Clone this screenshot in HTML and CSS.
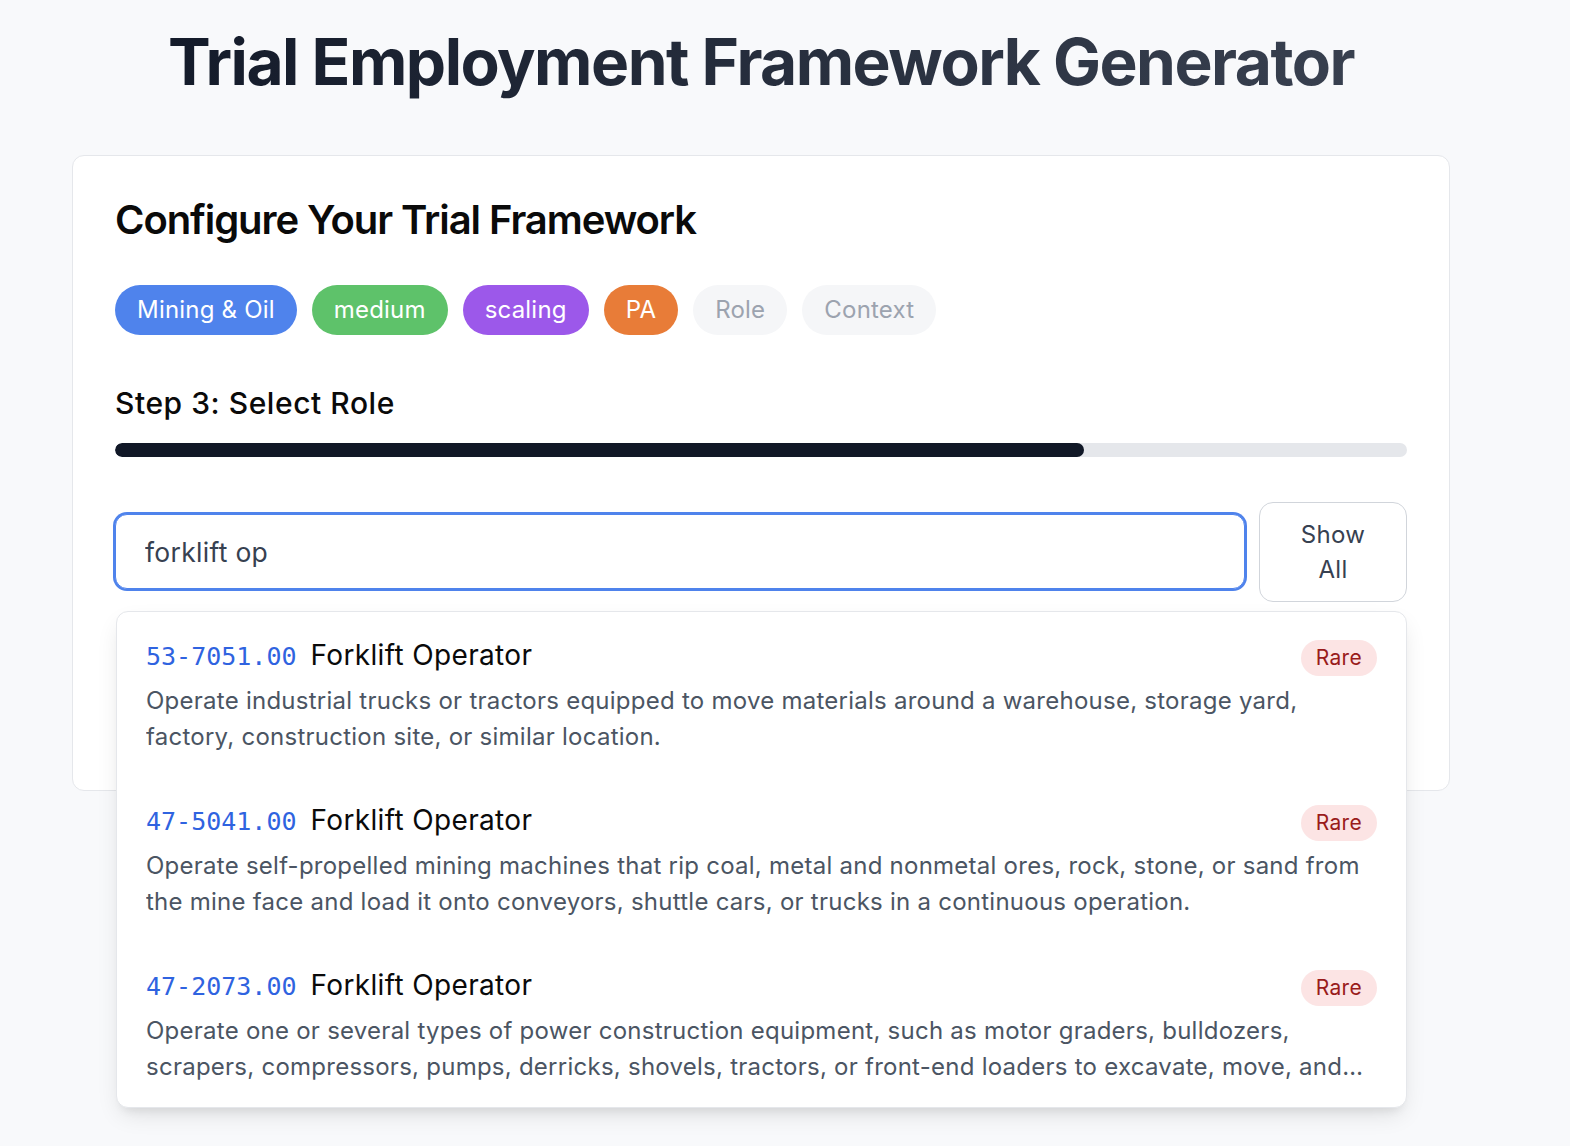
FILE: index.html
```html
<!DOCTYPE html>
<html lang="en">
<head>
<meta charset="utf-8">
<title>Trial Employment Framework Generator</title>
<link rel="stylesheet" href="styles.css">
</head>
<body>
<main class="page">
  <h1 class="page-title">Trial Employment Framework Generator</h1>
  <section class="card">
    <h2 class="card-title">Configure Your Trial Framework</h2>
    <div class="pills">
      <span class="pill pill-blue">Mining &amp; Oil</span>
      <span class="pill pill-green">medium</span>
      <span class="pill pill-purple">scaling</span>
      <span class="pill pill-orange">PA</span>
      <span class="pill pill-muted">Role</span>
      <span class="pill pill-muted">Context</span>
    </div>
    <h3 class="step-title">Step 3: Select Role</h3>
    <div class="progress"><div class="progress-fill" style="width:75%"></div></div>
    <div class="search-row">
      <input class="search-input" type="text" value="forklift op">
      <button class="show-all">Show All</button>
      <ul class="results">
        <li class="result">
          <div class="result-head">
            <div class="result-name"><span class="code">53-7051.00</span><span class="role">Forklift Operator</span></div>
            <span class="badge">Rare</span>
          </div>
          <p class="desc">Operate industrial trucks or tractors equipped to move materials around a warehouse, storage yard, factory, construction site, or similar location.</p>
        </li>
        <li class="result">
          <div class="result-head">
            <div class="result-name"><span class="code">47-5041.00</span><span class="role">Forklift Operator</span></div>
            <span class="badge">Rare</span>
          </div>
          <p class="desc">Operate self-propelled mining machines that rip coal, metal and nonmetal ores, rock, stone, or sand from the mine face and load it onto conveyors, shuttle cars, or trucks in a continuous operation.</p>
        </li>
        <li class="result">
          <div class="result-head">
            <div class="result-name"><span class="code">47-2073.00</span><span class="role">Forklift Operator</span></div>
            <span class="badge">Rare</span>
          </div>
          <p class="desc">Operate one or several types of power construction equipment, such as motor graders, bulldozers, scrapers, compressors, pumps, derricks, shovels, tractors, or front-end loaders to excavate, move, and grade earth, erect structures, or pour concrete or other hard surface pavement.</p>
        </li>
      </ul>
    </div>
    <div class="card-spacer"></div>
  </section>
</main>
</body>
</html>
```

FILE: styles.css
```css
* { box-sizing: border-box; }

html, body {
  margin: 0;
  padding: 0;
}

body {
  background: #f8f9fb;
  font-family: Inter, "Noto Sans", "Liberation Sans", sans-serif;
  color: #111827;
  min-height: 1146px;
}

.page {
  width: 1378px;
  margin-left: 72px;
  padding-top: 24px;
}

.page-title {
  margin: 0 0 54px;
  text-align: center;
  font-size: 64px;
  line-height: 1.2;
  font-weight: 700;
  letter-spacing: -0.0235em;
  background: linear-gradient(90deg, #111827, #3b4352);
  -webkit-background-clip: text;
  background-clip: text;
  color: transparent;
}

.card {
  background: #ffffff;
  border: 1px solid #e5e7eb;
  border-radius: 12px;
  padding: 40px 42px 42px;
}

.card-title {
  margin: 0;
  font-size: 40px;
  line-height: 48px;
  font-weight: 600;
  letter-spacing: -0.027em;
  color: #0a0a0a;
}

.pills {
  display: flex;
  gap: 15px;
  margin-top: 41px;
}

.pill {
  display: inline-flex;
  align-items: center;
  height: 50px;
  padding: 0 22px;
  border-radius: 999px;
  font-size: 24px;
  letter-spacing: 0.2px;
  color: #ffffff;
}

.pill-blue { background: #4f83ec; }
.pill-green { background: #5ec26a; }
.pill-purple { background: #9c58ea; }
.pill-orange { background: #e87c38; }
.pill-muted { background: #f5f6f8; color: #9ca3af; }

.step-title {
  margin: 50px 0 0;
  font-size: 30px;
  line-height: 36px;
  font-weight: 500;
  letter-spacing: 0.55px;
  color: #0a0a0a;
}

.progress {
  margin-top: 22px;
  height: 14px;
  border-radius: 7px;
  background: #e5e7eb;
  overflow: hidden;
}

.progress-fill {
  height: 100%;
  border-radius: 7px;
  background: #111827;
}

.search-row {
  position: relative;
  display: flex;
  align-items: center;
  gap: 14px;
  margin-top: 45px;
}

.search-input {
  flex: 1;
  height: 75px;
  padding: 0 29px;
  border: 1px solid #4f83ec;
  border-radius: 12px;
  box-shadow: 0 0 0 2px #4f83ec;
  outline: none;
  font-family: inherit;
  font-size: 26.5px;
  letter-spacing: 0.3px;
  color: #374151;
  background: #ffffff;
}

.show-all {
  width: 148px;
  padding: 14px 40px;
  border: 1px solid #d1d5db;
  border-radius: 14px;
  background: #ffffff;
  font-family: inherit;
  font-size: 24px;
  line-height: 35px;
  letter-spacing: 0.3px;
  color: #374151;
  text-align: center;
}

.results {
  position: absolute;
  left: 1px;
  right: 0;
  top: calc(100% + 9px);
  z-index: 2;
  margin: 0;
  padding: 0;
  list-style: none;
  background: #ffffff;
  border: 1px solid #e5e7eb;
  border-radius: 12px;
  box-shadow: 0 10px 25px -5px rgba(0, 0, 0, 0.12), 0 8px 10px -6px rgba(0, 0, 0, 0.08);
}

.result {
  padding: 25px 29px 22px;
}

.result-head {
  display: flex;
  align-items: center;
  justify-content: space-between;
  height: 36px;
}

.result-name {
  display: flex;
  align-items: baseline;
  gap: 14px;
}

.code {
  font-family: "DejaVu Sans Mono", "Liberation Mono", monospace;
  font-size: 25px;
  color: #2f63e0;
}

.role {
  font-size: 28px;
  letter-spacing: 0.35px;
  color: #0a0a0a;
}

.badge {
  display: inline-flex;
  align-items: center;
  height: 36px;
  margin-top: 6px;
  padding: 0 15px;
  border-radius: 999px;
  background: #fce4e4;
  color: #991b1b;
  font-size: 21px;
  letter-spacing: 0.3px;
}

.desc {
  margin: 10px 0 0;
  font-size: 24px;
  line-height: 36px;
  letter-spacing: 0.25px;
  color: #4b5563;
  display: -webkit-box;
  -webkit-line-clamp: 2;
  -webkit-box-orient: vertical;
  overflow: hidden;
}

.card-spacer {
  height: 146px;
}
```
